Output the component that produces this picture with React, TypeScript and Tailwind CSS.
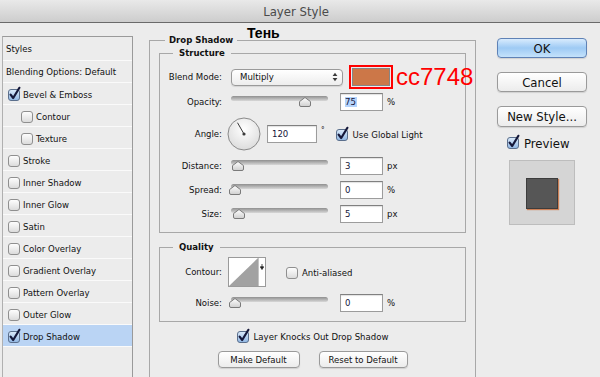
import React from "react";

function Box({ on = false }: { on?: boolean }) {
  return (
    <svg width="13" height="14" viewBox="0 0 13 14" className="shrink-0 overflow-visible">
      <defs>
        <linearGradient id="cbOff" x1="0" y1="0" x2="0" y2="1">
          <stop offset="0" stopColor="#ffffff" />
          <stop offset="1" stopColor="#dadada" />
        </linearGradient>
        <linearGradient id="cbOn" x1="0" y1="0" x2="0" y2="1">
          <stop offset="0" stopColor="#dcebfb" />
          <stop offset="1" stopColor="#8fb6e3" />
        </linearGradient>
      </defs>
      <rect
        x="0.5"
        y="2.5"
        width="11"
        height="11"
        rx="2.5"
        fill={on ? "url(#cbOn)" : "url(#cbOff)"}
        stroke={on ? "#5b6f8c" : "#8f8f8f"}
      />
      {on && (
        <path
          d="M2.6 7.6 L5.2 11 L11.4 0.8"
          fill="none"
          stroke="#15183a"
          strokeWidth="2.2"
          strokeLinecap="round"
          strokeLinejoin="round"
        />
      )}
    </svg>
  );
}

function Thumb() {
  return (
    <svg width="12" height="10" viewBox="0 0 12 10">
      <defs>
        <linearGradient id="thG" x1="0" y1="0" x2="0" y2="1">
          <stop offset="0" stopColor="#ffffff" />
          <stop offset="1" stopColor="#cfcfcf" />
        </linearGradient>
      </defs>
      <path
        d="M6 0.5 L11.5 4.6 L11.5 8 Q11.5 9.5 10 9.5 L2 9.5 Q0.5 9.5 0.5 8 L0.5 4.6 Z"
        fill="url(#thG)"
        stroke="#7a7a7a"
      />
    </svg>
  );
}

function Slider({ thumb }: { thumb: string }) {
  return (
    <div className="relative h-[20px] w-[97px] shrink-0">
      <div className="absolute left-0 right-0 top-[4px] h-[5px] rounded-full bg-gradient-to-b from-[#909090] to-[#d8d8d8]" />
      <div className={"absolute top-[5px] " + thumb}>
        <Thumb />
      </div>
    </div>
  );
}

function Field({ v, sel = false, w = "w-[43px]" }: { v: string; sel?: boolean; w?: string }) {
  return (
    <div
      className={
        "flex h-[18px] shrink-0 items-center border border-[#9c9c9c] border-t-[#808080] bg-white pl-[4px] text-[#15153a] shadow-[inset_0_1px_1px_rgba(0,0,0,0.12)] " +
        w
      }
    >
      {sel ? <span className="bg-[#b4d3fb] pr-[1px]">{v}</span> : <span>{v}</span>}
    </div>
  );
}

function Label({ t }: { t: string }) {
  return <div className="w-[62px] shrink-0 text-right">{t}</div>;
}

function SliderRow({
  label,
  thumb,
  value,
  unit,
  sel = false,
  cls,
}: {
  label: string;
  thumb: string;
  value: string;
  unit: string;
  sel?: boolean;
  cls: string;
}) {
  return (
    <div className={"flex h-[20px] items-center " + cls}>
      <Label t={label} />
      <div className="ml-[9px]">
        <Slider thumb={thumb} />
      </div>
      <div className="ml-[12px]">
        <Field v={value} sel={sel} />
      </div>
      <div className="ml-[4px]">{unit}</div>
    </div>
  );
}

function ListRow({
  text,
  check,
  on = false,
  indent = false,
  active = false,
  tall = false,
}: {
  text: string;
  check?: boolean;
  on?: boolean;
  indent?: boolean;
  active?: boolean;
  tall?: boolean;
}) {
  return (
    <div
      className={
        "flex items-center gap-[2px] border-b border-[#fafafa] " +
        (tall ? "h-[24px] " : "h-[22px] ") +
        (active ? "bg-[#bad4f4] " : "") +
        (check ? (indent ? "pl-[18px]" : "pl-[5px]") : "pl-[3px]")
      }
    >
      {check && <Box on={on} />}
      <span className={check ? "mt-[2px]" : ""}>{text}</span>
    </div>
  );
}

function Btn({ children, ok = false, cls }: { children: React.ReactNode; ok?: boolean; cls: string }) {
  return (
    <div
      className={
        "flex items-center justify-center rounded-[4px] border shadow-[0_1px_1px_rgba(0,0,0,0.12)] " +
        (ok
          ? "border-[#5f82b6] bg-gradient-to-b from-[#d8ebfd] via-[#9ecaf4] to-[#c4e2fb] "
          : "border-[#9a9a9a] bg-gradient-to-b from-[#ffffff] to-[#ececec] ") +
        cls
      }
    >
      {children}
    </div>
  );
}

export default function App() {
  return (
    <div className="relative flex h-[377px] w-[600px] flex-col overflow-hidden bg-[#ececec] font-['DejaVu_Sans_Condensed','Liberation_Sans',sans-serif] text-[9.5px] leading-none text-[#111]">
      {/* title bar */}
      <div className="flex h-[23px] shrink-0 items-center justify-center border-b border-[#6a6a6a] bg-gradient-to-b from-[#e9e9e9] to-[#cdcdcd] pr-[8px] text-[13px] text-[#4a4a4a]">
        Layer Style
      </div>

      <div className="flex flex-1">
        {/* left list */}
        <div className="ml-[2px] mt-[13px] flex w-[131px] shrink-0 flex-col border-x border-t border-[#9a9a9a] border-l-[#b0b0b0]">
          <ListRow text="Styles" tall />
          <ListRow text="Blending Options: Default" />
          <ListRow text="Bevel & Emboss" check on />
          <ListRow text="Contour" check indent />
          <ListRow text="Texture" check indent />
          <ListRow text="Stroke" check />
          <ListRow text="Inner Shadow" check />
          <ListRow text="Inner Glow" check />
          <ListRow text="Satin" check />
          <ListRow text="Color Overlay" check />
          <ListRow text="Gradient Overlay" check />
          <ListRow text="Pattern Overlay" check />
          <ListRow text="Outer Glow" check />
          <ListRow text="Drop Shadow" check on active />
        </div>

        {/* middle */}
        <div className="ml-[16px] w-[327px] shrink-0 pt-[11px]">
          <fieldset className="w-[327px] min-w-0 border border-[#a8a8a8] px-[9px] pb-[40px]">
            <legend className="ml-[6px] px-[4px] font-bold leading-[12px]">Drop Shadow</legend>

            <fieldset className="mt-[1px] w-[307px] min-w-0 border border-[#a8a8a8] pb-[8px]">
              <legend className="ml-[13px] px-[6px] font-bold leading-[12px]">Structure</legend>

              {/* blend mode */}
              <div className="mt-[9px] flex h-[18px] w-[305px] items-center">
                <Label t="Blend Mode:" />
                <div className="ml-[9px] flex h-[17px] w-[112px] shrink-0 items-center justify-between rounded-[4px] border border-[#9a9a9a] bg-gradient-to-b from-[#ffffff] to-[#ededed] pl-[8px] pr-[4px] shadow-[0_1px_1px_rgba(0,0,0,0.1)]">
                  <span>Multiply</span>
                  <svg width="6" height="10" viewBox="0 0 6 10">
                    <path d="M3 0.8 L5.4 3.9 L0.6 3.9Z M3 9.2 L5.4 6.1 L0.6 6.1Z" fill="#3a3a3a" />
                  </svg>
                </div>
                <div className="ml-[6px] h-[24px] w-[44px] shrink-0 border-2 border-[#ff0000] p-[1px]">
                  <div className="h-full w-full border border-[#858585] bg-[#cc7748]" />
                </div>
                <div className="ml-[3px] shrink-0 font-['Liberation_Sans',sans-serif] text-[24px] leading-[24px] text-[#ff0000]">
                  cc7748
                </div>
              </div>

              <SliderRow cls="mt-[6px]" label="Opacity:" thumb="left-[68px]" value="75" sel unit="%" />

              {/* angle */}
              <div className="mt-[5px] flex h-[34px] items-center">
                <Label t="Angle:" />
                <svg width="34" height="34" viewBox="0 0 34 34" className="ml-[5px] shrink-0">
                  <defs>
                    <radialGradient id="dialG" cx="0.5" cy="0.35" r="0.65">
                      <stop offset="0" stopColor="#ffffff" />
                      <stop offset="1" stopColor="#dcdcdc" />
                    </radialGradient>
                  </defs>
                  <circle cx="17" cy="17" r="16" fill="url(#dialG)" stroke="#8a8a8a" />
                  <line x1="17" y1="17" x2="10.5" y2="5.7" stroke="#3a3a3a" strokeWidth="1" />
                  <circle cx="17" cy="17" r="1.6" fill="#3a3a3a" />
                </svg>
                <div className="ml-[6px]">
                  <Field v="120" w="w-[50px]" />
                </div>
                <div className="mb-[6px] ml-[4px] text-[8px]">°</div>
                <div className="ml-[11px] flex items-center gap-[4px]">
                  <Box on />
                  <span className="mt-[2px]">Use Global Light</span>
                </div>
              </div>

              <SliderRow cls="mt-[5px]" label="Distance:" thumb="left-[1px]" value="3" unit="px" />
              <SliderRow cls="mt-[4px]" label="Spread:" thumb="left-[-2px]" value="0" unit="%" />
              <SliderRow cls="mt-[4px]" label="Size:" thumb="left-[2px]" value="5" unit="px" />
            </fieldset>

            <fieldset className="mt-[8px] w-[307px] min-w-0 border border-[#a8a8a8] pb-[8px]">
              <legend className="ml-[13px] px-[6px] font-bold leading-[12px]">Quality</legend>

              <div className="mt-[4px] flex h-[30px] items-center">
                <Label t="Contour:" />
                <div className="ml-[6px] flex h-[30px] w-[38px] shrink-0 border border-[#9a9a9a] bg-white">
                  <svg width="29" height="28" viewBox="0 0 29 28" className="shrink-0">
                    <polygon points="0,28 29,0 29,28" fill="#a2a2a2" />
                  </svg>
                  <div className="flex flex-1 justify-center border-l border-[#c4c4c4] pt-[6px]">
                    <svg width="4" height="6" viewBox="0 0 4 6">
                      <path d="M2 0 L2 3 M0.3 2.8 L3.7 2.8 L2 5.5Z" stroke="#222" strokeWidth="0.8" fill="#222" />
                    </svg>
                  </div>
                </div>
                <div className="ml-[20px] flex items-center gap-[3px]">
                  <Box />
                  <span className="mt-[2px]">Anti-aliased</span>
                </div>
              </div>

              <SliderRow cls="mt-[6px]" label="Noise:" thumb="left-[-2px]" value="0" unit="%" />
            </fieldset>

            <div className="mt-[6px] flex h-[16px] items-center justify-center gap-[4px]">
              <Box on />
              <span className="mt-[2px]">Layer Knocks Out Drop Shadow</span>
            </div>

            <div className="mt-[7px] flex justify-center gap-[19px]">
              <Btn cls="h-[17px] w-[82px]">Make Default</Btn>
              <Btn cls="h-[17px] w-[89px]">Reset to Default</Btn>
            </div>
          </fieldset>
        </div>

        {/* right */}
        <div className="ml-[21px] flex flex-col pt-[15px] text-[13px]">
          <Btn ok cls="h-[20px] w-[90px]">OK</Btn>
          <Btn cls="mt-[14px] h-[20px] w-[90px]">Cancel</Btn>
          <Btn cls="mt-[14px] h-[21px] w-[90px]">New Style...</Btn>
          <div className="ml-[10px] mt-[7px] flex h-[16px] items-center gap-[4px]">
            <Box on />
            <span className="mt-[2px]">Preview</span>
          </div>
          <div className="ml-[12px] mt-[10px] flex h-[65px] w-[66px] items-center justify-center border border-[#bdbdbd] bg-[#d5d5d5]">
            <div className="mt-[2px] h-[31px] w-[32px] border border-[#3c3c3c] bg-[#565656] shadow-[1px_1px_1px_rgba(204,119,72,0.9)]" />
          </div>
        </div>
      </div>

      {/* annotation */}
      <div className="absolute left-[247px] top-[25px] font-['Liberation_Sans',sans-serif] text-[14px] font-bold leading-[16px] text-black">
        Тень
      </div>
    </div>
  );
}
